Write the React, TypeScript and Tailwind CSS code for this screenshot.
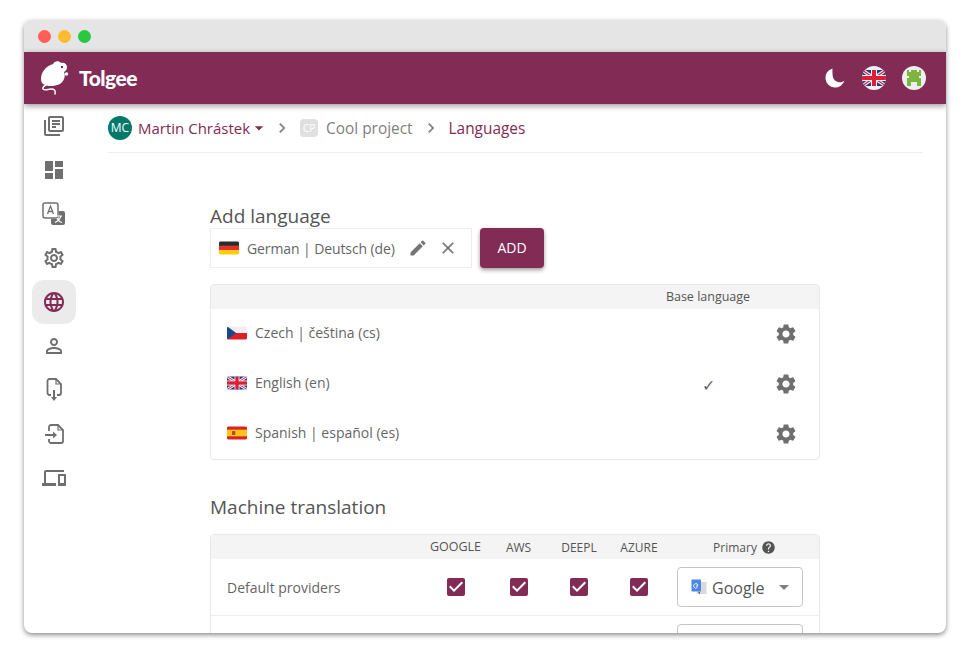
import { MdOutlineLibraryBooks, MdDashboard, MdOutlineSettings, MdLanguage, MdPersonOutline, MdOutlineDevices, MdSettings, MdEdit, MdClose, MdHelp, MdCheckBox, MdArrowDropDown, MdChevronRight } from "react-icons/md"

const font = { fontFamily: '"Open Sans", "Noto Sans", sans-serif' }

function FlagGb({ size = 20 }: { size?: number }) {
  return (
    <svg width={size} height={size} viewBox="0 0 24 24">
      <clipPath id="gb"><rect x="0" y="4" width="24" height="16" rx="2" /></clipPath>
      <g clipPath="url(#gb)">
        <rect x="0" y="4" width="24" height="16" fill="#26397f" />
        <path d="M0 4l24 16M24 4L0 20" stroke="#f1f3f6" strokeWidth="3.500" />
        <path d="M0 4l24 16M24 4L0 20" stroke="#dd1f36" strokeWidth="1.200" />
        <rect x="0" y="9" width="24" height="6" fill="#f1f3f6" />
        <rect x="9" y="4" width="6" height="16" fill="#f1f3f6" />
        <rect x="0" y="10" width="24" height="4" fill="#dd1f36" />
        <rect x="10" y="4" width="4" height="16" fill="#dd1f36" />
      </g>
    </svg>
  )
}

function FlagDe() {
  return (
    <svg width="20" height="20" viewBox="0 0 24 24">
      <clipPath id="de"><rect x="0" y="4" width="24" height="16" rx="2" /></clipPath>
      <g clipPath="url(#de)">
        <rect x="0" y="4" width="24" height="5.500" fill="#2b2b2b" />
        <rect x="0" y="9.500" width="24" height="5" fill="#e5322c" />
        <rect x="0" y="14.500" width="24" height="5.500" fill="#ffcd05" />
      </g>
    </svg>
  )
}

function FlagCz() {
  return (
    <svg width="20" height="20" viewBox="0 0 24 24">
      <clipPath id="cz"><rect x="0" y="4" width="24" height="16" rx="2" /></clipPath>
      <g clipPath="url(#cz)">
        <rect x="0" y="4" width="24" height="8" fill="#eceff3" />
        <rect x="0" y="12" width="24" height="8" fill="#dd1f26" />
        <path d="M0 4l11 8-11 8z" fill="#17488c" />
      </g>
    </svg>
  )
}

function FlagEs() {
  return (
    <svg width="20" height="20" viewBox="0 0 24 24">
      <clipPath id="es"><rect x="0" y="4" width="24" height="16" rx="2" /></clipPath>
      <g clipPath="url(#es)">
        <rect x="0" y="4" width="24" height="16" fill="#d8232a" />
        <rect x="0" y="8" width="24" height="8" fill="#fcc419" />
        <rect x="6" y="9.500" width="4" height="5" rx="1" fill="#c8402a" />
      </g>
    </svg>
  )
}

function Logo() {
  return (
    <svg width="30" height="36" viewBox="0 0 30 36" fill="white">
      <path d="M13 4c1-3 6-4 8-1 3-1 6 1 6 4 0 2-1 4-3 5 1 2 1 5 0 7-2 5-7 7-13 7-6 0-10-2-10-7C1 12 6 6 13 4z" />
      <circle cx="26.500" cy="14" r="1.800" />
      <path d="M6 25c-2 1-4 3-3 4 2 2 5 0 8 0 3 0 5 1 4 5" fill="none" stroke="white" strokeWidth="1.500" strokeLinecap="round" />
      <circle cx="22" cy="7" r="1.200" fill="#822b55" />
    </svg>
  )
}

function Moon() {
  return (
    <svg width="24" height="24" viewBox="0 0 24 24" fill="white">
      <path d="M10.500 2.500a9.700 9.700 0 1 0 12 11.700c-1.300 1.500-3.300 2.300-5.300 2.100-3.500-.3-6.200-3-6.500-6.500-.2-2.300-.4-5.300-.2-7.300z" />
    </svg>
  )
}

function Invader() {
  return (
    <div className="w-6 h-6 rounded-full bg-[#eeeeee] flex items-center justify-center">
      <svg width="14" height="16" viewBox="0 0 7 8" fill="#7cb53f">
        <path d="M0 0h1v1h1V0h3v1h1V0h1v3H6v1h1v4H5V6H2v2H0V4h1V3H0z" />
      </svg>
    </div>
  )
}

function TranslateIcon() {
  return (
    <svg width="24" height="24" viewBox="0 0 24 24">
      <rect x="1" y="1" width="15" height="15" rx="2" fill="white" stroke="#6f6f6f" strokeWidth="1.500" />
      <path d="M5.500 12l3-8 3 8M6.500 9.500h4" fill="none" stroke="#6f6f6f" strokeWidth="1.300" />
      <path d="M9 16.800h7.800V9H21a2 2 0 0 1 2 2v10a2 2 0 0 1-2 2H11a2 2 0 0 1-2-2z" fill="#6f6f6f" />
      <path d="M13 14h7M19 14c-1 3-3 5-6 6.500M15 16c1 2 3 4 5 4.500" fill="none" stroke="white" strokeWidth="1.100" />
    </svg>
  )
}

function ExportIcon() {
  return (
    <svg width="24" height="24" viewBox="0 0 24 24" fill="none" stroke="#6f6f6f" strokeWidth="1.800">
      <path d="M9 17H7.500a2 2 0 0 1-2-2V3a2 2 0 0 1 2-2h6.500l5 5v9a2 2 0 0 1-2 2H15" />
      <path d="M14 1v5h5" strokeWidth="1.200" />
      <path d="M12 12v10" strokeWidth="2" />
      <path d="M9 19h6l-3 4z" fill="#6f6f6f" stroke="none" />
    </svg>
  )
}

function ImportIcon() {
  return (
    <svg width="24" height="24" viewBox="0 0 24 24" fill="none" stroke="#6f6f6f" strokeWidth="1.800">
      <path d="M7 9V5a2 2 0 0 1 2-2h7l5 5v11a2 2 0 0 1-2 2H9a2 2 0 0 1-2-2v-2" />
      <path d="M16 3v5h5" strokeWidth="1.200" />
      <path d="M3 13h9" strokeWidth="2" />
      <path d="M11 9.500l4 3.500-4 3.500z" fill="#6f6f6f" stroke="none" />
    </svg>
  )
}

function GoogleMark() {
  return (
    <svg width="16" height="16" viewBox="0 0 16 16">
      <rect x="6" y="3" width="9.500" height="12" fill="#d9d9d9" />
      <rect x="0.500" y="0.500" width="9.500" height="12" rx="0.500" fill="#4a86e8" />
      <path d="M7 13l2 2.500V13z" fill="#3267c0" />
      <path d="M7 6.500a2.200 2.200 0 1 0-.7 2M5 7h2" fill="none" stroke="white" strokeWidth="0.900" />
    </svg>
  )
}

const sideItems = [
  <MdOutlineLibraryBooks size={24} color="#6f6f6f" />,
  <MdDashboard size={24} color="#6f6f6f" />,
  <TranslateIcon />,
  <MdOutlineSettings size={24} color="#6f6f6f" />,
  <MdLanguage size={24} color="#822b55" />,
  <MdPersonOutline size={24} color="#6f6f6f" />,
  <ExportIcon />,
  <ImportIcon />,
  <MdOutlineDevices size={24} color="#6f6f6f" />,
]

const languages = [
  { flag: <FlagCz />, label: "Czech | čeština (cs)", base: false },
  { flag: <FlagGb />, label: "English (en)", base: true },
  { flag: <FlagEs />, label: "Spanish | español (es)", base: false },
]

export default function App() {
  return (
    <div className="w-[970px] h-[661px] bg-white pt-5 pl-6 overflow-hidden" style={font}>
      <div className="w-[922px] h-[613px] rounded-lg bg-white overflow-hidden flex flex-col shadow-[0_2px_5px_rgba(0,0,0,0.45)]">
        <div className="h-8 shrink-0 bg-[#e5e5e5] flex items-center gap-[7px] pl-[14px] pt-px">
          <span className="w-[13px] h-[13px] rounded-full bg-[#ff5f57]" />
          <span className="w-[13px] h-[13px] rounded-full bg-[#febc2e]" />
          <span className="w-[13px] h-[13px] rounded-full bg-[#28c840]" />
        </div>

        <header className="h-[52px] shrink-0 bg-[#822b55] flex items-center pl-4 pr-5 shadow-[0_2px_6px_rgba(0,0,0,0.4)] relative">
          <Logo />
          <span className="ml-[9px] text-[21px] text-white tracking-tight" style={{ fontFamily: '"Lato", sans-serif', fontWeight: 900 }}>Tolgee</span>
          <div className="ml-auto flex items-center gap-4">
            <Moon />
            <div className="w-6 h-6 rounded-full overflow-hidden flex items-center justify-center bg-[#eef1f5]"><FlagGb size={38} /></div>
            <Invader />
          </div>
        </header>

        <div className="flex flex-1 min-h-0">
          <aside className="w-[84px] shrink-0 pl-2 flex flex-col">
            {sideItems.map((icon, i) => (
              <div key={i} className={`w-11 h-11 rounded-xl flex items-center justify-center ${i === 4 ? "bg-[#ebebeb]" : ""}`}>
                {icon}
              </div>
            ))}
          </aside>

          <main className="flex-1 min-w-0 pr-6">
            <div className="h-[49px] border-b border-[#eeeeee] flex items-center text-[15px]">
              <div className="w-6 h-6 rounded-full bg-[#00796b] text-white text-xs flex items-center justify-center">MC</div>
              <span className="ml-[6px] pt-px text-[#822b55]">Martin Chrástek</span>
              <MdArrowDropDown size={20} className="text-[#822b55] -ml-[1px]" />
              <MdChevronRight size={20} className="ml-[3px] text-[#808080]" />
              <div className="ml-[8px] w-[18px] h-[18px] rounded-sm bg-[#e0e0e0] text-white text-[10px] flex items-center justify-center">CP</div>
              <span className="ml-2 pt-[2px] text-[15.4px] text-[#808080]">Cool project</span>
              <MdChevronRight size={20} className="ml-[8px] text-[#808080]" />
              <span className="ml-[8px] pt-[2px] text-[15.4px] text-[#822b55]">Languages</span>
            </div>

            <div className="w-[610px] ml-[102px] pt-[50px]">
              <h2 className="text-[19px] leading-[27px] text-[#555555]">Add language</h2>
              <div className="flex items-center gap-2 mt-[-2px]">
                <div className="w-[262px] h-10 border border-[#eeeeee] flex items-center pl-2 text-sm text-[#666666]">
                  <FlagDe />
                  <span className="ml-2 pt-px tracking-[-0.1px]">German | Deutsch (de)</span>
                  <MdEdit size={20} className="ml-[13px] text-[#757575]" />
                  <MdClose size={20} className="ml-[10px] text-[#757575]" />
                </div>
                <button className="w-16 h-10 rounded bg-[#822b55] text-white text-sm shadow-[0_2px_4px_rgba(0,0,0,0.4)]">ADD</button>
              </div>

              <div className="mt-4 border border-[#e8e8e8] rounded overflow-hidden">
                <div className="h-6 bg-[#f4f4f4] grid grid-cols-[453px_88px_1fr] items-center">
                  <span />
                  <span className="text-[12.500px] text-center text-[#555555]">Base language</span>
                </div>
                {languages.map((l) => (
                  <div key={l.label} className="h-[50px] grid grid-cols-[453px_88px_1fr] items-center text-sm text-[#666666]">
                    <div className="flex items-center gap-2 pl-4 pb-[2px]">
                      {l.flag}
                      <span>{l.label}</span>
                    </div>
                    <span className="text-center pt-[3px] text-base font-light text-[#666666]" style={{ fontFamily: '"DejaVu Sans", sans-serif' }}>{l.base ? "✓" : ""}</span>
                    <MdSettings size={24} className="justify-self-center text-[#6f6f6f]" />
                  </div>
                ))}
              </div>

              <h2 className="mt-[34px] text-[19px] leading-[27px] text-[#555555]">Machine translation</h2>

              <div className="mt-[13px] border border-[#e8e8e8] rounded-t overflow-hidden">
                <div className="h-6 bg-[#f4f4f4] grid grid-cols-[213px_63px_63px_58px_62px_1fr] items-center pt-px text-xs text-[#555555] text-center">
                  <span />
                  <span className="text-[12.500px]">GOOGLE</span>
                  <span>AWS</span>
                  <span>DEEPL</span>
                  <span>AZURE</span>
                  <span className="flex items-center justify-center gap-1">Primary <MdHelp size={15} className="text-[#555555]" /></span>
                </div>
                <div className="h-[57px] border-b border-[#eeeeee] grid grid-cols-[213px_63px_63px_58px_62px_1fr] items-center">
                  <span className="pl-4 pt-px text-sm text-[#666666]">Default providers</span>
                  {[0, 1, 2, 3].map((i) => (
                    <MdCheckBox key={i} size={24} className="justify-self-center text-[#822b55]" />
                  ))}
                  <div className="w-[126px] h-10 ml-[7px] rounded border border-[#c4c4c4] flex items-center pl-[13px] pr-[6px]">
                    <GoogleMark />
                    <span className="ml-[5px] pt-px text-base text-[#555555]">Google</span>
                    <MdArrowDropDown size={24} className="ml-auto text-[#808080]" />
                  </div>
                </div>
                <div className="h-[40px] pt-2 pl-[466px]">
                  <div className="w-[126px] h-10 rounded border border-[#c4c4c4]" />
                </div>
              </div>
            </div>
          </main>
        </div>
      </div>
    </div>
  )
}
